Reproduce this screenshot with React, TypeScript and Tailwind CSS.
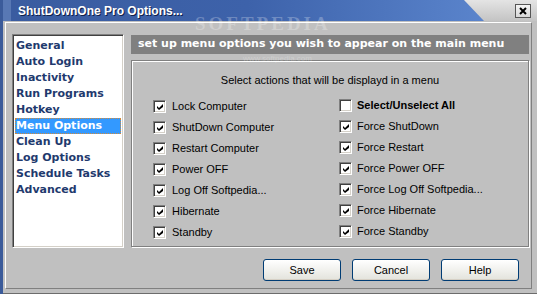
import React from "react";

const menuItems = [
  "General",
  "Auto Login",
  "Inactivity",
  "Run Programs",
  "Hotkey",
  "Menu Options",
  "Clean Up",
  "Log Options",
  "Schedule Tasks",
  "Advanced",
];

const leftActions = [
  "Lock Computer",
  "ShutDown Computer",
  "Restart Computer",
  "Power OFF",
  "Log Off Softpedia...",
  "Hibernate",
  "Standby",
];

const rightActions = [
  "Force ShutDown",
  "Force Restart",
  "Force Power OFF",
  "Force Log Off Softpedia...",
  "Force Hibernate",
  "Force Standby",
];

const CheckBox = ({ checked }: { checked: boolean }) => (
  <div className="w-[13px] h-[13px] shrink-0 bg-white border border-t-[#808080] border-l-[#808080] border-b-white border-r-white shadow-[inset_1px_1px_0_#404040,inset_-1px_-1px_0_#d4d0c8] flex items-center justify-center">
    {checked && (
      <svg width="9" height="9" viewBox="0 0 9 9" className="ml-[1px] mt-[1px]">
        <polygon points="1,3 3,5 7,1 7,4 3,7 1,5" fill="#000" />
      </svg>
    )}
  </div>
);

const ActionRow = ({ label, checked = true, bold = false }: { label: string; checked?: boolean; bold?: boolean }) => (
  <div className="h-[21px] flex items-center gap-[6px]">
    <CheckBox checked={checked} />
    <span className={bold ? "font-bold text-black" : "text-black"}>{label}</span>
  </div>
);

const WinButton = ({ label }: { label: string }) => (
  <button className="w-[78px] h-[22px] rounded-[3px] border border-[#003c74] bg-gradient-to-b from-white to-[#e3e3dc] text-[11px] text-black flex items-center justify-center shadow-[inset_0_-1px_0_#d6d0c5]">
    {label}
  </button>
);

export default function App() {
  return (
    <div className="relative w-[537px] h-[294px] overflow-hidden bg-[#c0c0c0] border-l-[3px] border-l-[#3b5b9a] flex flex-col font-['Liberation_Sans',sans-serif] text-[11px]">
      {/* title bar */}
      <div className="h-[21px] shrink-0 flex bg-gradient-to-b from-[#e4e4e4] to-[#c4c4c4]">
        <div className="w-[481px] h-full bg-gradient-to-r from-[#3a5ca0] via-[#3d62aa] to-[#5a84cc] [clip-path:polygon(0_0,461px_0,481px_100%,0_100%)] border-l-[8px] border-l-[#5878b4] flex items-center pl-[7px]">
          <span className="text-white font-bold text-[12px] [text-shadow:1px_1px_0_#10204a]">
            ShutDownOne Pro Options...
          </span>
        </div>
        <div className="ml-auto mr-[6px] mt-[4px] w-[16px] h-[14px] bg-gradient-to-b from-[#f4f4f4] to-[#d8d8d8] border border-[#555] flex items-center justify-center">
          <svg width="8" height="8" viewBox="0 0 8 8">
            <path d="M1 1L7 7M7 1L1 7" stroke="#000" strokeWidth="2" />
          </svg>
        </div>
      </div>

      {/* body */}
      <div className="flex-1 pl-[2px] pr-[5px] pt-[1px] pb-[4px] border-b-[1px] border-b-[#6c6c6c]">
        <div className="h-full border border-t-white border-l-white border-b-[#808080] border-r-[#808080] flex pl-[6px] pt-[11px] pr-[2px]">
          {/* listbox */}
          <div className="w-[112px] h-[214px] shrink-0 bg-white border border-t-[#808080] border-l-[#808080] border-b-white border-r-white shadow-[inset_1px_1px_0_#404040,inset_-1px_-1px_0_#d4d0c8] pt-[3px] px-[2px] font-['DejaVu_Sans',sans-serif] font-bold text-[11px] text-[#1f3a6e]">
            {menuItems.map((item) => (
              <div
                key={item}
                className={
                  item === "Menu Options"
                    ? "h-[16px] leading-[16px] pl-[1px] bg-[#3399ff] text-white outline-1 outline-dotted outline-[#d08a3c] -outline-offset-1"
                    : "h-[16px] leading-[16px] pl-[1px]"
                }
              >
                {item}
              </div>
            ))}
          </div>

          {/* right column */}
          <div className="flex-1 ml-[7px] pt-[1px] flex flex-col">
            <div className="h-[19px] bg-[#808080] flex items-center pl-[7px] font-['DejaVu_Sans',sans-serif] font-bold text-[11px] text-white">
              set up menu options you wish to appear on the main menu
            </div>

            <div className="mt-[6px] h-[187px] border border-[#808080] shadow-[inset_1px_1px_0_white,1px_1px_0_white] pt-[12px]">
              <div className="text-center leading-[14px] text-black">
                Select actions that will be displayd in a menu
              </div>
              <div className="mt-[9px] flex pl-[21px]">
                <div className="w-[186px]">
                  {leftActions.map((a) => (
                    <ActionRow key={a} label={a} />
                  ))}
                </div>
                <div className="-mt-[1px] [&>div]:gap-[5px]">
                  <ActionRow label="Select/Unselect All" checked={false} bold />
                  {rightActions.map((a) => (
                    <ActionRow key={a} label={a} />
                  ))}
                </div>
              </div>
            </div>

            <div className="mt-[12px] flex justify-end gap-[11px] pr-[10px]">
              <WinButton label="Save" />
              <WinButton label="Cancel" />
              <WinButton label="Help" />
            </div>
          </div>
        </div>
      </div>

      {/* watermark */}
      <div className="absolute left-[192px] top-[14px] text-[19px] leading-[19px] font-bold tracking-[3px] text-white/25 font-['Liberation_Serif',serif] pointer-events-none">
        SOFTPEDIA
      </div>
      <div className="absolute left-[240px] top-[55px] text-[8px] leading-[8px] text-white/25 pointer-events-none">
        www.softpedia.com
      </div>
    </div>
  );
}
